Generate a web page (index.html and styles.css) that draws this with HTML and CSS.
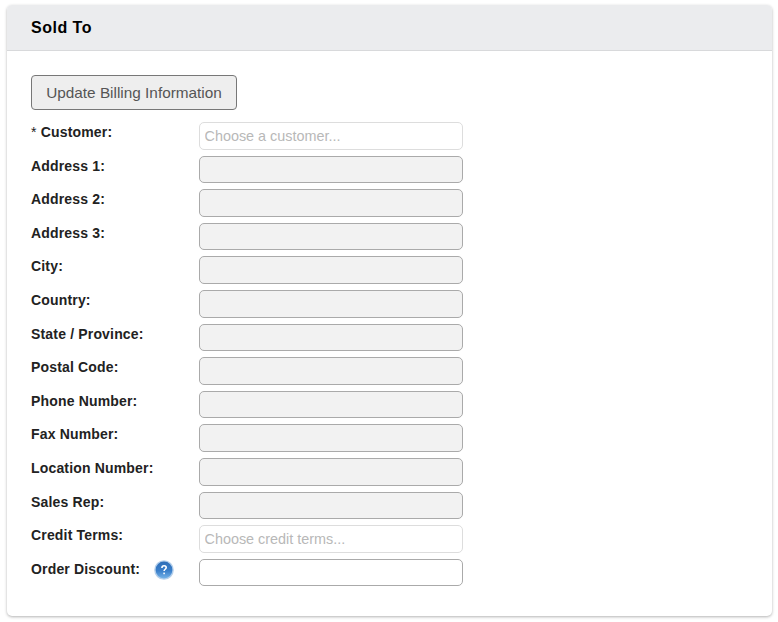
FILE: index.html
```html
<!DOCTYPE html>
<html lang="en">
<head>
    <meta charset="UTF-8">
    <meta name="viewport" content="width=device-width, initial-scale=1.0">
    <title>Sold To</title>
    <link rel="stylesheet" href="styles.css">
</head>
<body>
    <div class="panel">
        <div class="panel-heading">Sold To</div>
        <div class="panel-body">
            <button class="button" type="button">Update Billing Information</button>
            <div class="form">
                <div class="row">
                    <label class="label"><span class="required">*</span> Customer:</label>
                    <input class="field choose" type="text" placeholder="Choose a customer...">
                </div>
                <div class="row">
                    <label class="label">Address 1:</label>
                    <input class="field" type="text" disabled>
                </div>
                <div class="row">
                    <label class="label">Address 2:</label>
                    <input class="field" type="text" disabled>
                </div>
                <div class="row">
                    <label class="label">Address 3:</label>
                    <input class="field" type="text" disabled>
                </div>
                <div class="row">
                    <label class="label">City:</label>
                    <input class="field" type="text" disabled>
                </div>
                <div class="row">
                    <label class="label">Country:</label>
                    <input class="field" type="text" disabled>
                </div>
                <div class="row">
                    <label class="label">State / Province:</label>
                    <input class="field" type="text" disabled>
                </div>
                <div class="row">
                    <label class="label">Postal Code:</label>
                    <input class="field" type="text" disabled>
                </div>
                <div class="row">
                    <label class="label">Phone Number:</label>
                    <input class="field" type="text" disabled>
                </div>
                <div class="row">
                    <label class="label">Fax Number:</label>
                    <input class="field" type="text" disabled>
                </div>
                <div class="row">
                    <label class="label">Location Number:</label>
                    <input class="field" type="text" disabled>
                </div>
                <div class="row">
                    <label class="label">Sales Rep:</label>
                    <input class="field" type="text" disabled>
                </div>
                <div class="row">
                    <label class="label">Credit Terms:</label>
                    <input class="field choose" type="text" placeholder="Choose credit terms...">
                </div>
                <div class="row">
                    <label class="label">Order Discount:
                        <svg class="help" width="20" height="20" viewBox="0 0 20 20">
                            <defs>
                                <linearGradient id="helpFill" x1="0" y1="0" x2="0" y2="1">
                                    <stop offset="0" stop-color="#2f6fb8"/>
                                    <stop offset="0.55" stop-color="#3a7fca"/>
                                    <stop offset="1" stop-color="#74b2e8"/>
                                </linearGradient>
                            </defs>
                            <circle cx="10" cy="10" r="9.8" fill="#b4cfeb"/>
                            <circle cx="10" cy="10" r="8.4" fill="url(#helpFill)"/>
                            <path d="M7.9 7.9c0-1.3.9-2.1 2.2-2.1s2.1.8 2.1 1.8c0 1.6-2.1 1.7-2.1 3.4" fill="none" stroke="#fff" stroke-width="1.6"/>
                            <rect x="9.3" y="12.6" width="1.6" height="1.6" fill="#fff"/>
                        </svg>
                    </label>
                    <input class="field open" type="text">
                </div>
            </div>
        </div>
    </div>
</body>
</html>
```

FILE: styles.css
```css
body {
    font-family: 'Liberation Sans', Arial, sans-serif;
    font-size: 14px;
    color: #222;
    background-color: #fff;
    margin: 0;
    padding: 5px 6px 6px 7px;
}

.panel {
    background-color: #fff;
    border-radius: 5px;
    box-shadow: 0 1px 3px rgba(0, 0, 0, 0.3);
}

.panel-heading {
    height: 45px;
    line-height: 45px;
    padding-left: 24px;
    font-size: 16px;
    font-weight: bold;
    letter-spacing: 0.5px;
    color: #000;
    background-color: #ebecee;
    border-bottom: 1px solid #d8d9db;
    border-radius: 5px 5px 0 0;
}

.panel-body {
    padding: 24px 24px 30px;
}

.button {
    display: block;
    width: 206px;
    height: 35px;
    padding: 0;
    font-family: inherit;
    font-size: 15.35px;
    color: #555;
    background-color: #eee;
    border: 1px solid #777;
    border-radius: 4px;
    cursor: pointer;
}

.form {
    margin-top: 12px;
}

.row {
    display: flex;
    align-items: flex-start;
    height: 27.6px;
    margin-bottom: 6px;
}

.row:last-child {
    margin-bottom: 0;
}

.label {
    position: relative;
    width: 168px;
    flex: none;
    font-weight: bold;
    font-size: 14px;
    line-height: 20px;
    letter-spacing: 0.17px;
    color: #222;
    white-space: nowrap;
}

.required {
    font-weight: normal;
}

.help {
    position: absolute;
    left: 123px;
    top: 1px;
}

.field {
    box-sizing: border-box;
    width: 264px;
    height: 100%;
    padding: 0 5px 0 4.5px;
    font-family: inherit;
    font-size: 14.4px;
    background-color: #f2f2f2;
    border: 1px solid #aaa;
    border-radius: 5px;
    outline: none;
}

.field.choose {
    background-color: #fff;
    border-color: #ddd;
}

.field.choose::placeholder {
    color: #b8b8b8;
    opacity: 1;
}

.field.open {
    background-color: #fff;
}
```
